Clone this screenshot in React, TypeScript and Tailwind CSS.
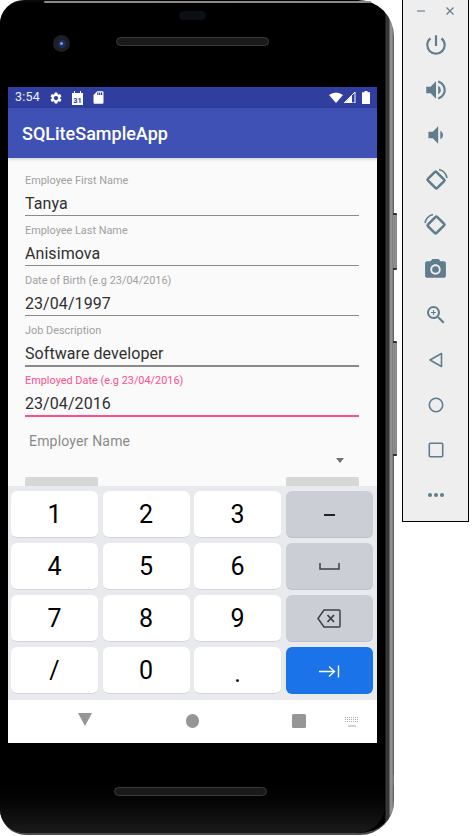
import { MdPowerSettingsNew, MdVolumeUp, MdVolumeDown, MdPhotoCamera, MdZoomIn, MdSettings, MdSdCard } from "react-icons/md";

const fields = [
  ["Employee First Name", "Tanya"],
  ["Employee Last Name", "Anisimova"],
  ["Date of Birth (e.g 23/04/2016)", "23/04/1997"],
  ["Job Description", "Software developer"],
];

function Field({ label, value, active }: { label: string; value: string; active?: boolean }) {
  return (
    <div className="h-[50.2px] flex flex-col">
      <div className={`h-[14px] mt-[1px] text-[10.9px] leading-[14px] ${active ? "text-[#ff4f8b]" : "text-[#a0a0a0]"}`}>{label}</div>
      <div className="h-[27px] pt-[4px] text-[16px] leading-[24px] tracking-[0.07px] text-[#303030]">{value}</div>
      <div className={active ? "h-[1.5px] bg-[#ff4f8b]" : "h-[1.5px] bg-[#8a8a8a]"} />
    </div>
  );
}

function Key({ children, kind = "w" }: { children: React.ReactNode; kind?: "w" | "g" | "b" }) {
  const c =
    kind === "w"
      ? "bg-white text-black border-b border-[#d3d5da]"
      : kind === "g"
        ? "bg-[#ccced5] text-[#3c4043] border-b border-[#bfc1c8]"
        : "bg-[#1a73e8] text-white";
  return <div className={`h-[47px] pt-[1px] rounded-[6px] flex items-center justify-center text-[25px] leading-none ${c}`}>{children}</div>;
}

function RotateIcon({ flip }: { flip?: boolean }) {
  return (
    <svg width="26" height="26" viewBox="0 0 26 26" fill="none" stroke="#5f7d8c" style={flip ? { transform: "scaleX(-1)" } : undefined}>
      <rect x="6.5" y="7" width="13" height="12" rx="1" strokeWidth="2.6" transform="rotate(45 13 13)" />
      <path d="M16 2.5 A11 11 0 0 1 24 11" strokeWidth="1.5" />
    </svg>
  );
}

function Tool({ children }: { children: React.ReactNode }) {
  return <div className="h-[45px] flex items-center justify-center text-[#5f7d8c]">{children}</div>;
}

function Speaker({ className }: { className: string }) {
  return <div className={`absolute w-[153px] h-[9px] rounded-full bg-[#1a1a18] border border-[#3a3a3a] ${className}`} />;
}

export default function App() {
  return (
    <div className="w-[472px] h-[836px] bg-white flex items-start overflow-hidden font-['Roboto',sans-serif]">
      <div className="relative w-[402px] h-[836px] shrink-0">
        {/* side rockers and rim highlights */}
        <div className="absolute left-[393px] top-[213px] w-[4px] h-[57px] bg-[#8b8b8b] rounded-r-[1px] border-y-2 border-[#333]" />
        <div className="absolute left-[393px] top-[341px] w-[4px] h-[115px] bg-[#8b8b8b] rounded-r-[1px] border-y-2 border-[#333]" />
        <div className="absolute left-[393px] top-[775px] w-[1px] h-[10px] bg-[#777]" />
        <div className="h-[835px] w-[394px] rounded-tl-[24px] rounded-tr-[36px] rounded-br-[34px] rounded-bl-[26px] border-b-2 border-b-[#4a4a4a] bg-[linear-gradient(90deg,#141414_0,#0a0a0a_3px,#000_385px,#3a3a3a_386px,#333_389px,#8f8f8f_390px,#8f8f8f_392px,#555_394px)] pr-[9px] pt-[2px]">
          <div className="relative h-full rounded-tl-[22px] rounded-tr-[30px] rounded-br-[28px] rounded-bl-[24px] bg-gradient-to-b from-black from-[92%] to-[#1b1b1b] pl-[8px] flex flex-col">
            <div className="absolute left-[44px] right-[14px] top-[-1px] h-[1.5px] bg-[#8a8a8a] rounded-full" />
            <div className="absolute left-[179px] top-[9px] w-[27px] h-[9px] rounded-full bg-[#0c0f14]" />
            <div className="absolute left-[53px] top-[33px] w-[17px] h-[17px] rounded-full bg-[#1c1f24] flex items-center justify-center">
              <div className="w-[8px] h-[8px] rounded-full bg-[#1d2f5f] flex items-center justify-center"><div className="w-[3px] h-[3px] rounded-full bg-[#7d9fe0]" /></div>
            </div>
            <Speaker className="left-[116px] top-[35px]" />
            <Speaker className="left-[114px] top-[785px]" />
            <div className="h-[85px] shrink-0" />
            <div className="w-[369px] h-[656px] shrink-0 flex flex-col bg-[#fafafa]">
              <div className="h-[21px] bg-[#303f9f] flex items-center pl-[7px] pr-[7px] text-white shrink-0">
                <span className="text-[12.5px] tracking-[0.2px] text-[#eef]">3:54</span>
                <MdSettings className="ml-[9px]" size={14} />
                <svg className="ml-[8px]" width="13" height="14" viewBox="0 0 13 14">
                  <path d="M1 2h2V0h1v2h5V0h1v2h2v12H1z" fill="white" />
                  <text x="6.5" y="11.5" textAnchor="middle" fontSize="7.5" fontWeight="700" fill="#303f9f">31</text>
                </svg>
                <MdSdCard className="ml-[7px]" size={15} />
                <div className="flex-1" />
                <svg width="14" height="11" viewBox="0 0 14 11"><path d="M0 3 Q7 -2 14 3 L7 11z" fill="white" /></svg>
                <svg className="ml-[1px]" width="12" height="11" viewBox="0 0 12 11"><path d="M11 0v11H0z" fill="none" stroke="white" strokeWidth="1" /><path d="M8 3.5V11H0.8z" fill="white" /></svg>
                <svg className="ml-[6px]" width="8" height="13" viewBox="0 0 8 13"><path d="M2.5 0h3v1.2H8V13H0V1.2h2.5z" fill="white" /></svg>
              </div>
              <div className="h-[50px] bg-[#3f51b5] flex items-center pl-[14px] text-white text-[18px] font-medium shrink-0 shadow-[0_1px_3px_rgba(0,0,0,0.2)] z-10">SQLiteSampleApp</div>
              <div className="h-[328px] overflow-hidden pl-[17px] pr-[18px] pt-[14.5px] shrink-0">
                {fields.map(([l, v]) => <Field key={l} label={l} value={v} />)}
                <Field label="Employed Date (e.g 23/04/2016)" value="23/04/2016" active />
                <div className="pl-[4px] pt-[8px] text-[14px] leading-[20px] tracking-[0.18px] text-[#8a8a8a]">Employer Name</div>
                <div className="flex justify-end pr-[15px] pt-[7px]">
                  <div className="w-0 h-0 border-x-[4px] border-x-transparent border-t-[5px] border-t-[#707070]" />
                </div>
                <div className="flex justify-between mt-[13.5px]">
                  <div className="w-[73px] h-[12px] rounded-t-[2px] bg-[#d6d7d7]" />
                  <div className="w-[73px] h-[12px] rounded-t-[2px] bg-[#d6d7d7]" />
                </div>
              </div>
              <div className="h-[214px] bg-[#e8eaed] px-[3px] pt-[5px] shrink-0 grid grid-cols-[repeat(4,87px)] gap-x-[4.5px] gap-y-[5px] content-start">
                <Key>1</Key><Key>2</Key><Key>3</Key>
                <Key kind="g"><span className="block w-[11px] h-[2px] bg-[#222]" /></Key>
                <Key>4</Key><Key>5</Key><Key>6</Key>
                <Key kind="g">
                  <svg width="21" height="7" viewBox="0 0 21 7" fill="none" stroke="#3c4043" strokeWidth="1.5"><path d="M1 0v6h19V0" /></svg>
                </Key>
                <Key>7</Key><Key>8</Key><Key>9</Key>
                <Key kind="g">
                  <svg width="24" height="19" viewBox="0 0 24 19" fill="none" stroke="#3c4043" strokeWidth="1.5"><path d="M7 1h15a1 1 0 0 1 1 1v15a1 1 0 0 1-1 1H7L1 9.5z" /><path d="M10.5 6l6.5 7M17 6l-6.5 7" strokeWidth="1.8" /></svg>
                </Key>
                <Key>/</Key><Key>0</Key><Key><span className="mt-[6px]">.</span></Key>
                <Key kind="b">
                  <svg width="21" height="13" viewBox="0 0 21 13" fill="none" stroke="white" strokeWidth="1.4"><path d="M0 6.5h15M10 1.5l5.5 5-5.5 5M19.5 0.5v12" /></svg>
                </Key>
              </div>
              <div className="h-[43px] bg-white shrink-0 relative">
                <div className="absolute left-[70px] top-[13px] w-0 h-0 border-x-[7.5px] border-x-transparent border-t-[13px] border-t-[#969696]" />
                <div className="absolute left-[177.5px] top-[14px] w-[13.5px] h-[13.5px] rounded-full bg-[#969696]" />
                <div className="absolute left-[284px] top-[14px] w-[13.5px] h-[13.5px] rounded-[1.5px] bg-[#969696]" />
                <svg className="absolute left-[337px] top-[17px]" width="14" height="10" viewBox="0 0 14 10" fill="none" stroke="#aaa">
                  <path d="M0 0.5h14M0 2.5h14M0 4.5h14" strokeDasharray="1 1" />
                  <path d="M3 9h8" />
                </svg>
              </div>
            </div>
          </div>
        </div>
      </div>
      <div className="w-[67px] h-[522px] shrink-0 bg-[#eeeeee] border border-t-0 border-black flex flex-col">
        <div className="h-[22px] flex justify-between items-center pl-[14px] pr-[14px] text-[#5f7d8c]">
          <span className="w-[8px] h-[1.5px] bg-[#9fb1ba]" />
          <svg width="8" height="8" viewBox="0 0 8 8" stroke="#5f7d8c" strokeWidth="1.2"><path d="M0.5 0.5l7 7M7.5 0.5l-7 7" /></svg>
        </div>
        <Tool><MdPowerSettingsNew size={26} /></Tool>
        <Tool><MdVolumeUp size={26} /></Tool>
        <Tool><MdVolumeDown size={26} /></Tool>
        <Tool><RotateIcon /></Tool>
        <Tool><RotateIcon flip /></Tool>
        <Tool><MdPhotoCamera size={25} /></Tool>
        <Tool><MdZoomIn size={24} /></Tool>
        <Tool><svg width="16" height="16" viewBox="0 0 16 16" fill="none" stroke="#5f7d8c" strokeWidth="1.6"><path d="M13.5 1.5v13L2 8z" strokeLinejoin="round" /></svg></Tool>
        <Tool><svg width="16" height="16" viewBox="0 0 16 16" fill="none" stroke="#5f7d8c" strokeWidth="1.6"><circle cx="8" cy="8" r="6.7" /></svg></Tool>
        <Tool><svg width="16" height="16" viewBox="0 0 16 16" fill="none" stroke="#5f7d8c" strokeWidth="1.6"><rect x="1.3" y="1.3" width="13.4" height="13.4" rx="1" /></svg></Tool>
        <Tool><svg width="18" height="6" viewBox="0 0 18 6" fill="#5f7d8c"><circle cx="3" cy="3" r="2" /><circle cx="9" cy="3" r="2" /><circle cx="15" cy="3" r="2" /></svg></Tool>
      </div>
    </div>
  );
}
